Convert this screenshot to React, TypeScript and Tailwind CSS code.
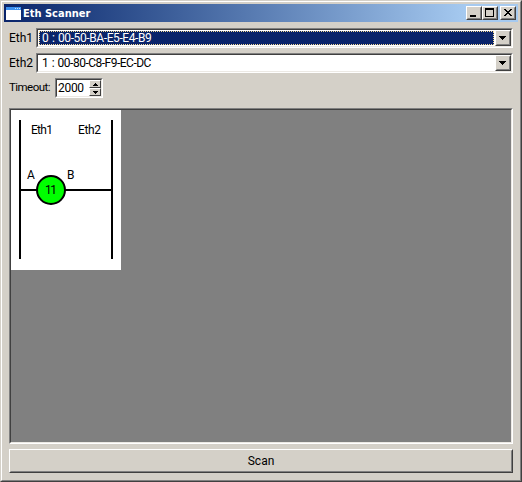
import type { ReactNode } from "react";

const sunken =
  "border border-t-[#808080] border-l-[#808080] border-r-white border-b-white";
const sunkenInner =
  "border border-t-[#404040] border-l-[#404040] border-r-[#ece9e4] border-b-[#ece9e4]";
const raised =
  "border border-t-white border-l-white border-r-[#404040] border-b-[#404040]";
const raisedInner =
  "border border-t-[#d4d0c8] border-l-[#d4d0c8] border-r-[#808080] border-b-[#808080]";

function CaptionButton({ children }: { children: ReactNode }) {
  return (
    <button className={`h-[14px] w-4 bg-[#d4d0c8] ${raised}`}>
      <span className={`block h-full w-full ${raisedInner}`}>
        <svg width="12" height="10" viewBox="0 0 12 10" className="block" shapeRendering="crispEdges">
          {children}
        </svg>
      </span>
    </button>
  );
}

function Combo({ label, value, focused }: { label: string; value: string; focused?: boolean }) {
  return (
    <div className="flex h-5 items-center">
      <label className="w-[27px] shrink-0 whitespace-nowrap">{label}</label>
      <div className={`h-5 grow ${sunken}`}>
        <div className={`flex h-full bg-white ${sunkenInner}`}>
          <div className="grow p-px">
            <div
              className={`flex h-full items-center whitespace-pre border border-dotted pl-[2px] [word-spacing:1px] ${
                focused
                  ? "border-[#f5db95] bg-[#0a246a] tracking-[-0.4px] text-white"
                  : "border-white tracking-[-0.5px]"
              }`}
            >
              {value}
            </div>
          </div>
          <button className={`w-4 shrink-0 bg-[#d4d0c8] ${raised}`}>
            <span className={`flex h-full w-full items-center pl-[2px] ${raisedInner}`}>
              <svg width="7" height="4" viewBox="0 0 7 4" shapeRendering="crispEdges">
                <path d="M0 0h7v1H0zM1 1h5v1H1zM2 2h3v1H2zM3 3h1v1H3z" />
              </svg>
            </span>
          </button>
        </div>
      </div>
    </div>
  );
}

function SpinBox() {
  return (
    <div className={`h-5 w-12 ${sunken}`}>
      <div className={`flex h-full bg-white ${sunkenInner}`}>
        <span className="flex grow items-center pl-px tracking-[-0.3px]">2000</span>
        <div className="flex w-3 flex-col">
          {["M2 0h1v1H2zM1 1h3v1H1zM0 2h5v1H0z", "M0 0h5v1H0zM1 1h3v1H1zM2 2h1v1H2z"].map((d) => (
            <button key={d} className={`flex h-2 items-center justify-center bg-[#d4d0c8] ${raised}`}>
              <svg width="5" height="3" viewBox="0 0 5 3" shapeRendering="crispEdges">
                <path d={d} />
              </svg>
            </button>
          ))}
        </div>
      </div>
    </div>
  );
}

function Diagram() {
  return (
    <svg width="110" height="160" viewBox="0 0 110 160" className="block bg-white">
      <path d="M9 10v139M101 10v139M9 80h92" stroke="#000" strokeWidth="2" fill="none" />
      <circle cx="40" cy="80" r="14" fill="#0f0" stroke="#000" strokeWidth="2" />
      <g fontSize="12" fill="#000">
        <text x="20" y="24" textLength="22">Eth1</text>
        <text x="67" y="24" textLength="23">Eth2</text>
        <text x="16" y="69">A</text>
        <text x="56" y="69">B</text>
        <text x="34" y="84" textLength="12">11</text>
      </g>
    </svg>
  );
}

export default function App() {
  return (
    <div className="h-[482px] w-[522px] border border-t-[#d4d0c8] border-l-[#d4d0c8] border-r-[#404040] border-b-[#404040] bg-[#d4d0c8] font-['Roboto','Liberation_Sans',sans-serif] text-[12px] leading-none text-black">
      <div className="flex h-full flex-col border border-t-white border-l-white border-r-[#808080] border-b-[#808080] p-[2px]">
        <header className="flex h-[18px] shrink-0 items-center bg-linear-to-r from-[#0a246a] to-[#a6caf0] to-90% pr-[2px] pl-[2px] text-white">
          <svg width="15" height="13" viewBox="0 0 15 13" shapeRendering="crispEdges">
            <path fill="#fff" d="M0 0h15v13H0z" />
            <path fill="#3c91f0" d="M0 0h15v3H0z" />
            <path fill="#c5e0ff" d="M9 1h1v1H9zM11 1h1v1h-1zM13 1h1v1h-1z" />
          </svg>
          <h1 className="ml-[2px] grow font-['DejaVu_Sans_Condensed','DejaVu_Sans',sans-serif] text-[11px] font-bold whitespace-nowrap">
            Eth Scanner
          </h1>
          <div className="flex">
            <CaptionButton>
              <path d="M2 7h6v2H2z" />
            </CaptionButton>
            <CaptionButton>
              <path fillRule="evenodd" d="M1 0h9v9H1zM2 2v6h7V2z" />
            </CaptionButton>
            <span className="w-[2px]" />
            <CaptionButton>
              <path d="M2 1h2v1H2zM8 1h2v1H8zM3 2h2v1H3zM7 2h2v1H7zM4 3h4v1H4zM5 4h2v1H5zM4 5h4v1H4zM3 6h2v1H3zM7 6h2v1H7zM2 7h2v1H2zM8 7h2v1H8z" />
            </CaptionButton>
          </div>
        </header>
        <main className="flex grow flex-col gap-[5px] px-[5px] pt-[6px] pb-[5px]">
          <Combo label="Eth1" value="0 : 00-50-BA-E5-E4-B9" focused />
          <Combo label="Eth2" value="1 : 00-80-C8-F9-EC-DC" />
          <div className="flex items-center">
            <label className="w-[46px] whitespace-nowrap text-[11.5px] tracking-[-0.55px]">Timeout:</label>
            <SpinBox />
          </div>
          <div className={`mt-[5px] h-[336px] ${sunken}`}>
            <div className={`h-full bg-[#808080] ${sunkenInner}`}>
              <Diagram />
            </div>
          </div>
          <button className={`h-6 ${raised}`}>
            <span className={`flex h-full items-center justify-center ${raisedInner}`}>
              Scan
            </span>
          </button>
        </main>
      </div>
    </div>
  );
}
